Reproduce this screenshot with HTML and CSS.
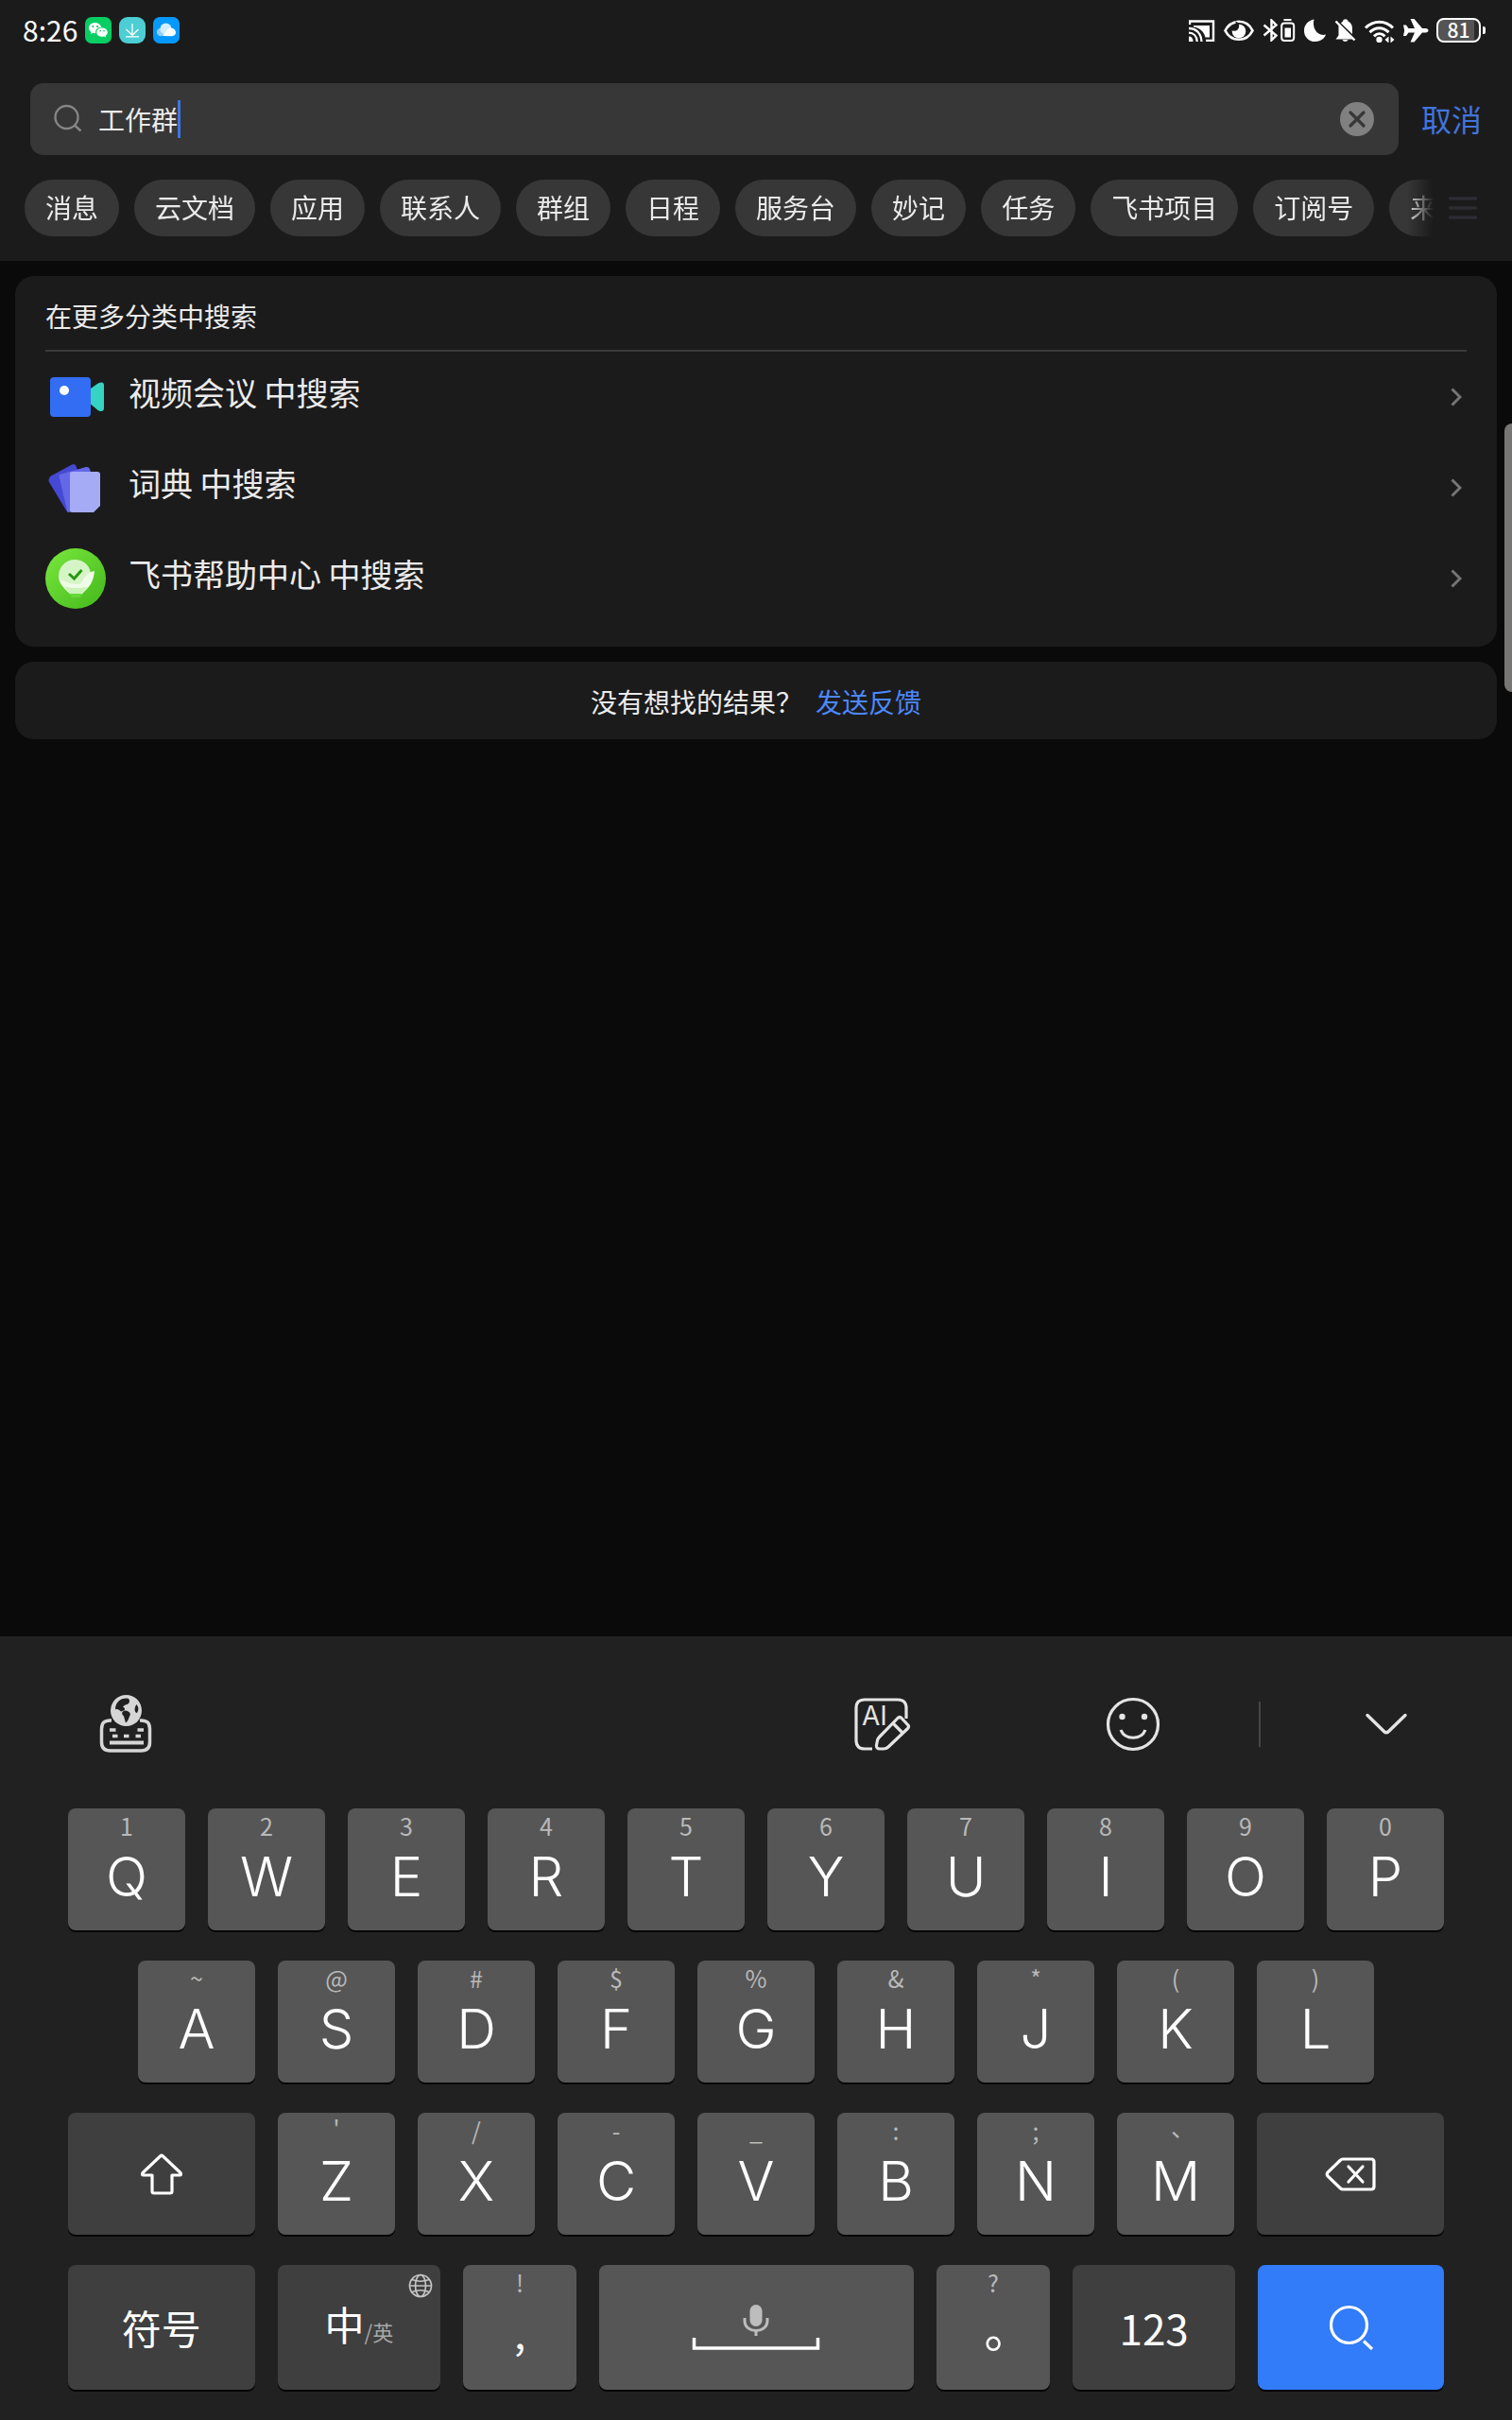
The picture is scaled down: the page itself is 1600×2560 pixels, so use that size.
FILE: index.html
```html
<!DOCTYPE html>
<html lang="zh-CN">
<head>
<meta charset="utf-8">
<meta name="viewport" content="width=device-width, initial-scale=1">
<title>搜索</title>
<link rel="stylesheet" href="styles.css">
</head>
<body>
<header class="top">
  <div class="status">
    <div class="status-left">
      <time class="clock">8:26</time>
      <svg class="app" viewBox="0 0 28 28" width="28" height="28" aria-hidden="true"><rect width="28" height="28" rx="7" fill="#06ce63"/><path fill="#fff" d="M10.500 6C6.900 6 4 8.400 4 11.600c0 1.800 1 3.300 2.500 4.300L6 18l2.400-1.200c.9.200 1.900.4 2.900.3-.8-3.600 2.300-6.400 5.900-6.300C16.700 8.200 14 6 10.500 6z"/><path fill="#fff" d="M18 11.500c-3.200 0-5.700 2-5.700 4.700s2.500 4.600 5.700 4.600c.8 0 1.500-.1 2.200-.3l2 1-.5-1.800c1.300-.9 2.100-2.100 2.100-3.500 0-2.700-2.600-4.700-5.800-4.700z"/><g fill="#06b557"><circle cx="8.400" cy="10" r="1"/><circle cx="13" cy="10" r="1"/><circle cx="16.200" cy="14.700" r=".8"/><circle cx="20" cy="14.700" r=".8"/></g></svg>
      <svg class="app" viewBox="0 0 28 28" width="28" height="28" aria-hidden="true"><rect width="28" height="28" rx="9" fill="#4dcdd4"/><path d="M14 7v12M7.500 13l6.500 6.300 6.500-6.300M7 20.800h14" fill="none" stroke="#fff" stroke-width="1.300"/></svg>
      <svg class="app" viewBox="0 0 28 28" width="28" height="28" aria-hidden="true"><rect width="28" height="28" rx="7" fill="#0598fd"/><circle cx="8" cy="16" r="4.200" fill="#8fd0ff"/><circle cx="13.500" cy="12.500" r="6" fill="#d4edff"/><path d="M10 20l6-7.500a5 5 0 0 1 8 3.500 4.200 4.200 0 0 1-4 4.200z" fill="#fff"/></svg>
    </div>
    <div class="status-right">
      <svg viewBox="1257 20 28 24" width="28" height="24" aria-hidden="true"><path d="M1258 26v-3.500h25V43h-8" fill="none" stroke="#fff" stroke-width="2.400"/><path fill="#fff" d="M1262 27h17v12.500h-4.500C1273 33 1268 29.500 1262 28.500z"/><path d="M1257 30c8 0 13 5.500 13.500 14M1257 34.700c5 0 8.500 3.500 8.800 9.300" fill="none" stroke="#fff" stroke-width="2.300"/><path fill="#fff" d="M1257 38.500c3 0 4.500 2 4.600 5.500h-4.600z"/></svg>
      <svg viewBox="1293 20 34 24" width="34" height="24" aria-hidden="true"><path d="M1295.500 32.300c3-6 8.500-9.500 14.500-9.500s11.500 3.500 14.500 9.500c-3 6-8.500 9.500-14.500 9.500s-11.500-3.500-14.500-9.500z" fill="none" stroke="#fff" stroke-width="2.600"/><circle cx="1310" cy="33" r="7.300" fill="#fff"/><circle cx="1305" cy="27.500" r="5.200" fill="#1b1b1b"/><path d="M1297.500 29.500q4-5 9-6" fill="none" stroke="#fff" stroke-width="2.600"/></svg>
      <svg viewBox="1335 20 35 24" width="35" height="24" aria-hidden="true"><path d="M1336.500 26.500l13 11-5 5V21.500l5 5-13 11" fill="none" stroke="#fff" stroke-width="2.400"/><path fill="#fff" d="M1357.500 20h8v2h-8zM1358.500 29.500h6.500v10h-6.500z"/><rect x="1355.200" y="24.500" width="13" height="18.500" rx="3" fill="none" stroke="#fff" stroke-width="2"/></svg>
      <svg viewBox="1378 20 25 24" width="25" height="24" aria-hidden="true"><path fill="#fff" d="M1389.500 20.500c-6 1-10.500 5.600-10.500 11.900 0 6.700 5 11.600 11.700 11.600 5.300 0 9.600-2.800 11.300-7.500-8.500 2.500-15-6.500-12.500-16z"/></svg>
      <svg viewBox="1411 20 23 24" width="23" height="24" aria-hidden="true"><path fill="#fff" d="M1418 24.500a8 8 0 0 1 2-2c.5-3 5-3 5.500 0 3 1.500 4.500 4 4.500 7.500v6zM1415.500 26.500l14.500 15H1412.500l3-4z"/><path d="M1412.500 22.500l20 20" stroke="#fff" stroke-width="2.400"/><path fill="#fff" d="M1419.500 42h6c-1 2.600-5 2.600-6 0z"/></svg>
      <svg viewBox="1442 19 33 25" width="33" height="25" aria-hidden="true"><path d="M1444 28.500c8.500-8.500 21-8.500 29 0M1448.500 33.200c6-5.800 14-5.800 20 0M1453 37.300c3.500-3.400 8-3.400 11.500 0" fill="none" stroke="#fff" stroke-width="3"/><circle cx="1458.500" cy="41" r="3.200" fill="#fff"/><path fill="#fff" d="M1464.500 41l4-3.500v7zM1474.500 41l-4-3.500v7z"/></svg>
      <svg viewBox="1483 19 28 26" width="28" height="26" aria-hidden="true"><path fill="#fff" d="M1484 26.500h3l2.500 3.500h6.500l-4.500-10h4l8.500 10h3.500c4 0 4 4.500 0 4.500h-3.500l-8.500 10h-4l4.500-10h-6.500L1487 38h-3l1.200-5.700z"/></svg>
      <div class="battery"><span class="battery-level">81</span><i class="battery-tip"></i></div>
    </div>
  </div>

  <form class="search" onsubmit="return false">
    <div class="search-box">
      <svg viewBox="0 0 32 32" width="32" height="32" aria-hidden="true"><circle cx="14.500" cy="14" r="12" fill="none" stroke="#858585" stroke-width="2.400"/><path d="M23 22.500l6.500 6" stroke="#858585" stroke-width="2.400"/></svg>
      <input class="search-input" type="text" value="工作群" size="3" aria-label="搜索">
      <span class="caret"></span>
      <button class="clear" type="button" aria-label="清除"><svg viewBox="0 0 36 36" width="36" height="36"><circle cx="18" cy="18" r="18" fill="#808080"/><path d="M11 11l14 14M25 11L11 25" stroke="#373737" stroke-width="3.200" stroke-linecap="round"/></svg></button>
    </div>
    <button class="cancel" type="button">取消</button>
  </form>

  <nav class="filters">
    <div class="chips">
      <button class="chip">消息</button><button class="chip">云文档</button><button class="chip">应用</button><button class="chip">联系人</button><button class="chip">群组</button><button class="chip">日程</button><button class="chip">服务台</button><button class="chip">妙记</button><button class="chip">任务</button><button class="chip">飞书项目</button><button class="chip">订阅号</button><button class="chip">来</button>
    </div>
    <button class="more" aria-label="全部分类"><svg viewBox="0 0 30 26" width="30" height="26"><path d="M1.500 3h27M1.500 13h27M1.500 23h27" stroke="#2c2d33" stroke-width="3.500" stroke-linecap="round"/></svg></button>
  </nav>
</header>

<main class="results">
  <section class="card">
    <h2 class="card-title">在更多分类中搜索</h2>
    <a class="row" href="#meeting">
      <svg viewBox="0 0 64 64" width="64" height="64" aria-hidden="true"><rect x="5" y="11" width="43" height="42" rx="4" fill="#336df4"/><path fill="#35d4c2" d="M48 23l7-5q2-1.500 4-1.500 3 0 3 3v24q0 3.500-3 3.500-2 0-4-1.500l-7-6z"/><circle cx="20" cy="25" r="5" fill="#fff"/></svg>
      <span class="row-text">视频会议 中搜索</span>
      <svg class="chevron" viewBox="0 0 12 20" width="12" height="20" aria-hidden="true"><path d="M1.500 1.500L10 10l-8.500 8.500"/></svg>
    </a>
    <a class="row" href="#dictionary">
      <svg viewBox="0 0 64 64" width="64" height="64" aria-hidden="true"><path fill="#4549d3" d="M5 20L28 7.500q3-1.500 4.500 1.500L40 30 25 58q-2 0-3-2L4 26q-1-2 0-3.500z"/><path fill="#6468e8" d="M15 18l28-8q3-.5 4 2l8 30-30 16q-2 0-2-2L14.500 20q0-1.500.5-2z"/><path fill="#a5acf5" d="M28 15h27q3 0 3 3v33l-7 7H28q-2 0-2-2V17q0-2 2-2z"/></svg>
      <span class="row-text">词典 中搜索</span>
      <svg class="chevron" viewBox="0 0 12 20" width="12" height="20" aria-hidden="true"><path d="M1.500 1.500L10 10l-8.500 8.500"/></svg>
    </a>
    <a class="row" href="#help">
      <svg viewBox="0 0 64 64" width="64" height="64" aria-hidden="true"><defs><linearGradient id="lime" x1="0" y1="0" x2="1" y2="1"><stop stop-color="#7ae83e"/><stop offset="1" stop-color="#43b81b"/></linearGradient></defs><circle cx="32" cy="32" r="32" fill="url(#lime)"/><path fill="#d6f5c6" d="M31 12c10 0 17 7 17 16L36 48h-9C19 41 14 37 14 30c0-11 8-18 17-18z"/><path fill="#effce8" d="M15 32c7 5 14 6 21 6 6-4 5-12 16-14-1 11-5 16-8 19l-6 6H27C21 44 16 39 15 32z"/><path fill="#cdf3b8" d="M20 40c7 3 18 2 25 1l-8 8H27z"/><path fill="#66d93a" d="M26 48h12l-1 4h-9z"/><path d="M25 27l5.500 5 8-9" fill="none" stroke="#279a12" stroke-width="3"/></svg>
      <span class="row-text">飞书帮助中心 中搜索</span>
      <svg class="chevron" viewBox="0 0 12 20" width="12" height="20" aria-hidden="true"><path d="M1.500 1.500L10 10l-8.500 8.500"/></svg>
    </a>
  </section>
  <section class="card feedback">
    <span>没有想找的结果？</span>
    <a href="#feedback">发送反馈</a>
  </section>
  <div class="scroll-thumb"></div>
</main>

<section class="keyboard" aria-label="键盘">
  <div class="tools">
    <button class="tool" aria-label="切换键盘"><svg viewBox="0 0 64 64" width="64" height="64"><g fill="none" stroke="#d6d6d6" stroke-width="3.500"><path d="M17 28C9 27.500 6.500 31 6.500 37v14q0 9 9 9h33q9 0 9-9V37c0-6-2.500-9.500-10.500-9"/></g><path d="M15 51.500h36" stroke="#d6d6d6" stroke-width="4"/><path d="M15 38h6.500M44.500 38H51M18 44.500h5.500M30 44.500h5.500M42.500 44.500H48" stroke="#d6d6d6" stroke-width="3.500"/><circle cx="32.500" cy="17.500" r="16.500" fill="#d6d6d6"/><path fill="#212121" d="M33 4.500c-7 0-12 4.500-12 12 2-1 4 0 6 2l3-1c2-1 1-3-1-4 3-3 7-2 7-6q0-3-3-3zM31 17.500c-3 1-4 3-1 6l2 7c3-2 3-5 5-9-1-3-3-4-6-4zM43.500 11c-3 4-2 9 .5 9 2-3 2-6-.5-9z"/></svg></button>
    <button class="tool tool-ai" aria-label="AI 写作"><svg viewBox="0 0 64 64" width="64" height="64"><g fill="none" stroke="#e4e4e4" stroke-width="3.200" stroke-linejoin="round"><path d="M23 58H15q-9 0-9-9V15q0-9 9-9h35q9 0 9 9v11"/><path d="M50 25.500q2-2 4 0l6.500 7q2 2 0 4L40 56q-2 2-5 2h-4q-4 0-3.500-4l1-5q.5-2 2-3.500zM45 31l10 10"/></g><text class="ai-mark" x="12" y="33">AI</text></svg></button>
    <button class="tool tool-emoji" aria-label="表情"><svg viewBox="0 0 64 64" width="64" height="64"><circle cx="32" cy="32" r="26.500" fill="none" stroke="#e4e4e4" stroke-width="3.200"/><circle cx="20.500" cy="24" r="3.200" fill="#e4e4e4"/><circle cx="44" cy="24" r="3.200" fill="#e4e4e4"/><path d="M19 38c4.500 11 21.500 11 26 0" fill="none" stroke="#e4e4e4" stroke-width="3.200"/></svg></button>
    <span class="tool-divider"></span>
    <button class="tool" aria-label="收起键盘"><svg viewBox="0 0 64 64" width="64" height="64"><path d="M12 22.500l17.500 17q2.500 2.500 5 0l17.500-17" fill="none" stroke="#e4e4e4" stroke-width="3.400" stroke-linecap="round"/></svg></button>
  </div>

  <div class="keys">
    <button class="key"><span class="hint">1</span><span class="letter">Q</span></button>
    <button class="key"><span class="hint">2</span><span class="letter">W</span></button>
    <button class="key"><span class="hint">3</span><span class="letter">E</span></button>
    <button class="key"><span class="hint">4</span><span class="letter">R</span></button>
    <button class="key"><span class="hint">5</span><span class="letter">T</span></button>
    <button class="key"><span class="hint">6</span><span class="letter">Y</span></button>
    <button class="key"><span class="hint">7</span><span class="letter">U</span></button>
    <button class="key"><span class="hint">8</span><span class="letter">I</span></button>
    <button class="key"><span class="hint">9</span><span class="letter">O</span></button>
    <button class="key"><span class="hint">0</span><span class="letter">P</span></button>
  </div>
  <div class="keys keys-inset">
    <button class="key"><span class="hint">~</span><span class="letter">A</span></button>
    <button class="key"><span class="hint">@</span><span class="letter">S</span></button>
    <button class="key"><span class="hint">#</span><span class="letter">D</span></button>
    <button class="key"><span class="hint">$</span><span class="letter">F</span></button>
    <button class="key"><span class="hint">%</span><span class="letter">G</span></button>
    <button class="key"><span class="hint">&amp;</span><span class="letter">H</span></button>
    <button class="key"><span class="hint">*</span><span class="letter">J</span></button>
    <button class="key"><span class="hint">(</span><span class="letter">K</span></button>
    <button class="key"><span class="hint">)</span><span class="letter">L</span></button>
  </div>
  <div class="keys">
    <button class="key key-dark key-wide" aria-label="Shift"><svg viewBox="0 0 44 44" width="44" height="44"><path d="M20.500 3q1.500-1.500 3 0L42 20.500q1.500 2.500-1 2.500H33v17q0 2-2 2H14q-2 0-2-2V23H3q-2.500 0-1-2.500z" fill="none" stroke="#fff" stroke-width="3.200" stroke-linejoin="round"/></svg></button>
    <button class="key"><span class="hint">'</span><span class="letter">Z</span></button>
    <button class="key"><span class="hint">/</span><span class="letter">X</span></button>
    <button class="key"><span class="hint">-</span><span class="letter">C</span></button>
    <button class="key"><span class="hint">_</span><span class="letter">V</span></button>
    <button class="key"><span class="hint">:</span><span class="letter">B</span></button>
    <button class="key"><span class="hint">;</span><span class="letter">N</span></button>
    <button class="key"><span class="hint hint-low centred-mark">、</span><span class="letter">M</span></button>
    <button class="key key-dark key-wide" aria-label="删除"><svg viewBox="0 0 54 38" width="54" height="38"><path d="M19 3h30q3 0 3 3v26q0 3-3 3H19q-1.500 0-3-1.500L3 21q-1.500-2 0-4L16 4.500Q17.500 3 19 3z" fill="none" stroke="#fff" stroke-width="3.200"/><path d="M25 11l15 16M40 11L25 27" stroke="#fff" stroke-width="3.200" stroke-linecap="round"/></svg></button>
  </div>
  <div class="keys keys-bottom">
    <button class="key key-dark key-wide"><span class="label">符号</span></button>
    <button class="key key-dark key-lang"><span class="label">中<small>/英</small></span><svg class="globe" viewBox="0 0 26 26" width="26" height="26" aria-hidden="true"><g fill="none" stroke="#c4c4c4" stroke-width="1.700"><circle cx="13" cy="13" r="11.500"/><ellipse cx="13" cy="13" rx="5.500" ry="11.500"/><path d="M1.500 13h23M4 6.500q9 3.500 18 0M4 19.500q9-3.500 18 0"/></g></svg></button>
    <button class="key key-mark"><span class="hint">!</span><span class="comma">,</span></button>
    <button class="key key-space" aria-label="空格"><svg viewBox="0 0 136 50" width="136" height="50"><rect x="61.500" y="1" width="13" height="23" rx="6.500" fill="#bdbdbd"/><path d="M56 15v3c0 14 24 14 24 0v-3M68 28v6" fill="none" stroke="#bdbdbd" stroke-width="3"/><path d="M2.500 36v11h131V36" fill="none" stroke="#fff" stroke-width="3.500"/></svg></button>
    <button class="key key-mark"><span class="hint">?</span><span class="full-stop centred-mark">。</span></button>
    <button class="key key-dark key-lang"><span class="label label-digits">123</span></button>
    <button class="key key-wide key-go" aria-label="搜索"><svg viewBox="0 0 48 48" width="48" height="48"><circle cx="21.500" cy="21.500" r="19" fill="none" stroke="#fff" stroke-width="3.200"/><path d="M37 38.500l9 8.500" stroke="#fff" stroke-width="3.200"/></svg></button>
  </div>
</section>
</body>
</html>
```

FILE: styles.css
```css
* {
  box-sizing: border-box;
}

body {
  margin: 0;
  min-height: 100vh;
  display: flex;
  flex-direction: column;
  background: #0a0a0a;
  color: #ebebeb;
  font-family: "Noto Sans CJK SC", sans-serif;
  font-size: 28px;
  line-height: 40px;
}

button,
input {
  margin: 0;
  padding: 0;
  border: 0;
  background: none;
  color: inherit;
  font: inherit;
  outline: none;
}

button {
  cursor: pointer;
}

svg {
  display: block;
  flex: none;
}

a {
  color: inherit;
  text-decoration: none;
}

/* Status bar and search header */

.top {
  background: #1b1b1b;
  padding-bottom: 26px;
}

.status {
  display: flex;
  justify-content: space-between;
  align-items: center;
  height: 64px;
  padding: 0 28px 0 24px;
}

.status-left,
.status-right {
  display: flex;
  align-items: center;
  gap: 8px;
}

.clock {
  padding-bottom: 2px;
  color: #fff;
  font-size: 30px;
}

.battery {
  display: flex;
  align-items: center;
  gap: 2px;
}

.battery-level {
  width: 47px;
  height: 26px;
  border: 2px solid #fff;
  border-radius: 8px;
  background: linear-gradient(90deg, #545454 38px, #2b2b2b 38px);
  color: #fff;
  font-size: 21px;
  font-weight: 500;
  line-height: 21px;
  text-align: center;
}

.battery-tip {
  width: 3px;
  height: 8px;
  border-radius: 0 2px 2px 0;
  background: #fff;
}

.search {
  display: flex;
  align-items: center;
  gap: 24px;
  padding: 24px 32px 26px;
}

.search-box {
  flex: 1;
  display: flex;
  align-items: center;
  height: 76px;
  padding: 0 26px 0 24px;
  border-radius: 14px;
  background: #373737;
}

.search-input {
  width: 84px;
  field-sizing: content;
  margin-left: 16px;
  height: 40px;
}

.caret {
  width: 3px;
  height: 40px;
  background: #3f74e6;
}

.clear {
  margin-left: auto;
}

.cancel {
  padding-bottom: 2px;
  color: #4274dd;
  font-size: 32px;
}

.filters {
  display: flex;
  align-items: center;
  gap: 16px;
  padding: 0 37px 0 26px;
}

.chips {
  flex: 1;
  min-width: 0;
  display: flex;
  gap: 16px;
  overflow: hidden;
  mask-image: linear-gradient(270deg, transparent, #000 28px);
}

.chip {
  flex: none;
  height: 60px;
  padding: 0 22px 2px;
  border-radius: 30px;
  background: #373737;
}

/* Results */

.results {
  position: relative;
  display: flex;
  flex-direction: column;
  gap: 16px;
  padding: 16px;
}

.card {
  border-radius: 20px;
  background: #1b1b1b;
  padding: 0 32px 24px;
}

.card-title {
  margin: 0;
  padding: 22px 0 16px;
  border-bottom: 2px solid #3b3b3b;
  font-size: 28px;
  font-weight: 400;
}

.row {
  display: flex;
  align-items: center;
  gap: 24px;
  height: 96px;
}

.row-text {
  flex: 1;
  padding-bottom: 10px;
  font-size: 34px;
}

.chevron {
  margin-right: 5px;
  fill: none;
  stroke: #757575;
  stroke-width: 3;
}

.feedback {
  display: flex;
  justify-content: center;
  gap: 14px;
  padding: 22px 32px 20px;
}

.feedback a {
  color: #4c88ff;
}

.scroll-thumb {
  position: absolute;
  top: 172px;
  right: 0;
  width: 8px;
  height: 284px;
  border-radius: 8px 0 0 8px;
  background: #787675;
}

/* Keyboard */

.keyboard {
  display: flex;
  flex-direction: column;
  gap: 32px;
  margin-top: auto;
  padding: 61px 72px 32px;
  background: #212121;
}

.tools {
  display: flex;
  align-items: center;
  gap: 101px;
  height: 64px;
  margin: 0 29px 25px;
}

.tool-ai {
  margin-left: auto;
}

.tool-emoji {
  margin-left: 102px;
}

.tool-divider {
  width: 2px;
  height: 48px;
  background: #454545;
}

.ai-mark {
  fill: #e4e4e4;
  font-family: Inter, sans-serif;
  font-size: 28px;
}

.keys {
  display: flex;
  gap: 24px;
  height: 129px;
}

.keys-inset {
  padding: 0 74px;
}

.keys-bottom {
  height: 132px;
}

.key {
  flex: 124 1 0;
  min-width: 0;
  position: relative;
  display: flex;
  flex-direction: column;
  align-items: center;
  border-radius: 8px;
  background: #565656;
  box-shadow: 0 2px 0 #060606;
  color: #fff;
}

.key-dark {
  background: #3f3f3f;
}

.key-wide,
.key-lang,
.key-space {
  justify-content: center;
}

.key-wide {
  flex-grow: 198;
}

.key-lang {
  flex-grow: 173;
}

.key-mark {
  flex-grow: 120;
}

.key-space {
  flex-grow: 334;
}

.key-go {
  flex-grow: 197;
  background: #327bf9;
}

.hint {
  color: #b9b9b9;
  font-size: 25px;
  line-height: 36px;
}

.hint-low {
  padding-top: 4px;
  margin-bottom: -4px;
}

.letter {
  font-family: Inter, sans-serif;
  font-size: 58px;
  font-weight: 300;
  line-height: 72px;
}

.label {
  font-size: 42px;
  line-height: 60px;
}

.label small {
  color: #a8a8a8;
  font-size: 22px;
}

.label-digits {
  font-size: 44px;
}

.globe {
  position: absolute;
  top: 9px;
  right: 8px;
}

.comma {
  font-size: 44px;
  line-height: 68px;
}

.full-stop {
  font-size: 50px;
  line-height: 88px;
}

.centred-mark {
  font-family: "Noto Sans CJK TC", sans-serif;
}
```
